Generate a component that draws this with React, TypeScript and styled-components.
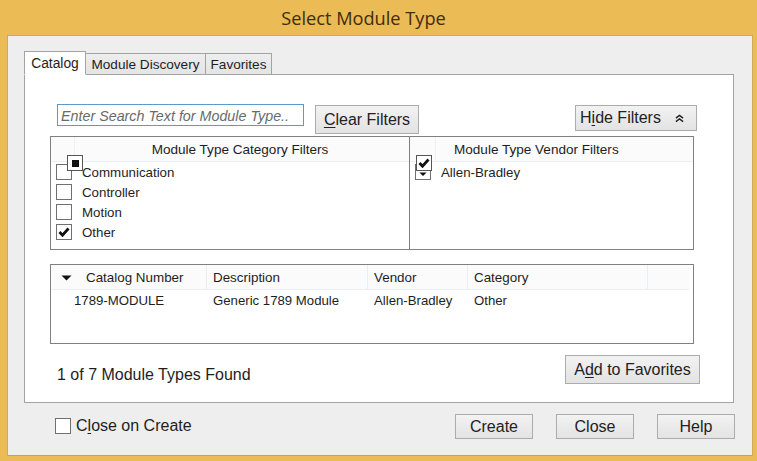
import React from "react";
import styled, { createGlobalStyle } from "styled-components";

const Global = createGlobalStyle`
  html, body { margin: 0; padding: 0; background: #ebbb55; }
  * { box-sizing: border-box; }
  u { text-underline-offset: 2px; text-decoration-thickness: 1px; }
`;

const Window = styled.div`
  position: relative;
  width: 757px;
  height: 461px;
  background: #ebbb55;
  font-family: "Liberation Sans", Arial, sans-serif;
  color: #1e1e1e;
  display: flex;
  flex-direction: column;
  overflow: hidden;
`;
const TitleBar = styled.div`
  height: 35px;
  flex: none;
  display: flex;
  align-items: center;
  justify-content: center;
  padding-right: 30px;
  font-family: "Open Sans", sans-serif;
  font-size: 18.2px;
  color: #3f2d0e;
`;
const Panel = styled.div`
  margin: 0 4px 0 7px;
  height: 421px;
  flex: none;
  background: #eeeeee;
  border: 1px solid #cfa95c;
  border-bottom-color: #c9a24f;
  padding: 15px 0 0 16px;
`;
const TabStrip = styled.div`
  display: flex;
  align-items: flex-end;
  height: 24px;
  position: relative;
  z-index: 1;
`;
const Tab = styled.div<{ $active?: boolean; $w: number }>`
  width: ${(p) => p.$w}px;
  height: ${(p) => (p.$active ? 24 : 22)}px;
  display: flex;
  align-items: center;
  justify-content: center;
  font-size: ${(p) => (p.$active ? 13.8 : 13.6)}px;
  background: ${(p) => (p.$active ? "#ffffff" : "linear-gradient(#eeeeee,#e4e4e4)")};
  border: 1px solid #a3a3a3;
  border-left-width: ${(p) => (p.$active ? 1 : 0)}px;
  border-bottom: ${(p) => (p.$active ? "1px solid #ffffff" : "1px solid #a3a3a3")};
`;
const Content = styled.div`
  width: 710px;
  height: 329px;
  margin-top: -1px;
  background: #ffffff;
  border: 1px solid #a3a3a3;
  padding: 29px 39px 0 25px;
`;
const Toolbar = styled.div`
  display: flex;
  align-items: flex-start;
  height: 32px;
  padding-left: 7px;
`;
const Search = styled.input`
  width: 247px;
  height: 22px;
  padding: 1px 3px 0;
  border: 1px solid #5b9bcb;
  outline: none;
  font: italic 14.3px "Liberation Sans", Arial, sans-serif;
  &::placeholder { color: #6a6a6a; opacity: 1; }
`;
const Button = styled.button<{ $w: number; $h: number }>`
  width: ${(p) => p.$w}px;
  height: ${(p) => p.$h}px;
  flex: none;
  padding: 0;
  display: inline-flex;
  align-items: center;
  justify-content: center;
  background: linear-gradient(#f2f2f2, #e3e3e3);
  border: 1px solid #acacac;
  color: #222;
  font: 16px "Liberation Sans", Arial, sans-serif;
`;
const ClearButton = styled(Button)`
  margin: 1px 0 0 11px;
`;
const HideButton = styled(Button)`
  margin: 1px -3px 0 auto;
  justify-content: flex-start;
  padding-left: 4px;
  gap: 14px;
`;
const Filters = styled.div`
  display: flex;
  height: 114px;
`;
const FilterBox = styled.div<{ $w: number }>`
  width: ${(p) => p.$w}px;
  flex: none;
  border: 1px solid #808080;
  position: relative;
  & + & { margin-left: -1px; }
`;
const FilterHeader = styled.div<{ $first: number }>`
  height: 25px;
  display: grid;
  grid-template-columns: ${(p) => p.$first}px 1fr;
  align-items: center;
  background: #fbfbfb;
  border-bottom: 1px solid #e9eff3;
  font-size: 13.55px;
`;
const HeaderBlank = styled.div`
  height: 100%;
  border-right: 1px solid #eef0f2;
`;
const HeaderTitle = styled.div<{ $left?: boolean }>`
  text-align: ${(p) => (p.$left ? "left" : "center")};
  padding-left: ${(p) => (p.$left ? 18 : 0)}px;
  padding-right: ${(p) => (p.$left ? 0 : 4)}px;
  padding-top: 1px;
  white-space: nowrap;
`;
const FilterRow = styled.div<{ $pad: number }>`
  display: flex;
  align-items: center;
  height: 20px;
  padding-left: ${(p) => p.$pad}px;
  font-size: 13.3px;
`;
const Box = styled.span<{ $size?: number }>`
  width: ${(p) => p.$size ?? 16}px;
  height: ${(p) => p.$size ?? 16}px;
  flex: none;
  display: inline-flex;
  align-items: center;
  justify-content: center;
  background: #ffffff;
  border: 1px solid #707070;
`;
const CaretBox = styled(Box)`
  padding-top: 5px;
`;
const RowLabel = styled.span`
  margin-left: 10px;
`;
const DockMarker = styled.span`
  position: absolute;
  left: 16px;
  top: 18px;
  width: 16px;
  height: 16px;
  background: #ffffff;
  border: 1px solid #555;
  display: flex;
  align-items: center;
  justify-content: center;
  &::after { content: ""; width: 7px; height: 7px; background: #111; }
`;
const VendorMarker = styled.span`
  position: absolute;
  left: 6px;
  top: 18px;
  width: 16px;
  height: 16px;
  background: #ffffff;
  border: 1px solid #555;
  display: flex;
  align-items: center;
  justify-content: center;
`;
const Grid = styled.div`
  margin-top: 14px;
  height: 80px;
  border: 1px solid #808080;
`;
const columns = "156px 161px 100px 180px 41px";
const GridHead = styled.div`
  display: grid;
  grid-template-columns: ${columns};
  height: 25px;
  background: #fbfbfb;
  border-bottom: 1px solid #e9eff3;
  margin-right: 4px;
  align-items: stretch;
  font-size: 13.4px;
`;
const HeadCell = styled.div`
  display: flex;
  align-items: center;
  padding-left: 6px;
  padding-top: 1px;
  border-right: 1px solid #e8eef3;
  &:last-child { border-right: 0; }
`;
const FirstHeadCell = styled(HeadCell)`
  padding-left: 10px;
  gap: 14px;
`;
const GridRow = styled.div`
  display: grid;
  grid-template-columns: ${columns};
  height: 20px;
  align-items: center;
  font-size: 13.2px;
`;
const Cell = styled.div`
  padding-left: 6px;
`;
const FirstCell = styled.div`
  padding-left: 23px;
`;
const StatusRow = styled.div`
  margin: 11px -6px 0 7px;
  display: flex;
  align-items: center;
  justify-content: space-between;
  font-size: 16px;
`;
const CountLabel = styled.span`
  margin-top: 10px;
`;
const Footer = styled.div`
  width: 711px;
  margin-top: 11px;
  display: flex;
  align-items: center;
  padding-left: 31px;
  gap: 23px;
  font-size: 16px;
`;
const CloseOption = styled.label`
  display: flex;
  align-items: center;
  gap: 5px;
  margin-right: auto;
  padding-bottom: 1px;
`;

const Check = () => (
  <svg width="12" height="10" viewBox="0 0 12 10">
    <path d="M1.5 5 L4.5 8.2 L10.5 1.5" fill="none" stroke="#111" strokeWidth="2.8" />
  </svg>
);
const Caret = ({ w = 11 }: { w?: number }) => (
  <svg width={w} height={w / 2 + 0.5} viewBox="0 0 11 6">
    <path d="M0.5 0.5 H10.5 L5.5 5.5 Z" fill="#111" />
  </svg>
);
const DoubleUp = () => (
  <svg width="9" height="9" viewBox="0 0 10 9">
    <path d="M1 4 L5 1 L9 4 M1 8 L5 5 L9 8" fill="none" stroke="#222" strokeWidth="1.6" />
  </svg>
);

const categories = ["Communication", "Controller", "Motion", "Other"];

export default function App() {
  return (
    <Window>
      <Global />
      <TitleBar>Select Module Type</TitleBar>
      <Panel>
        <TabStrip>
          <Tab $active $w={62}>Catalog</Tab>
          <Tab $w={120}>Module Discovery</Tab>
          <Tab $w={66}>Favorites</Tab>
        </TabStrip>
        <Content>
          <Toolbar>
            <Search placeholder="Enter Search Text for Module Type.." />
            <ClearButton $w={104} $h={29}>
              <span><u>C</u>lear Filters</span>
            </ClearButton>
            <HideButton $w={122} $h={26}>
              <span>H<u>i</u>de Filters</span>
              <DoubleUp />
            </HideButton>
          </Toolbar>
          <Filters>
            <FilterBox $w={360}>
              <FilterHeader $first={24}>
                <HeaderBlank />
                <HeaderTitle>Module Type Category Filters</HeaderTitle>
              </FilterHeader>
              {categories.map((c) => (
                <FilterRow $pad={5} key={c}>
                  <Box>{c === "Other" && <Check />}</Box>
                  <RowLabel>{c}</RowLabel>
                </FilterRow>
              ))}
              <DockMarker />
            </FilterBox>
            <FilterBox $w={285}>
              <FilterHeader $first={26}>
                <HeaderBlank />
                <HeaderTitle $left>Module Type Vendor Filters</HeaderTitle>
              </FilterHeader>
              <FilterRow $pad={5}>
                <CaretBox><Caret w={8} /></CaretBox>
                <RowLabel>Allen-Bradley</RowLabel>
              </FilterRow>
              <VendorMarker><Check /></VendorMarker>
            </FilterBox>
          </Filters>
          <Grid>
            <GridHead>
              <FirstHeadCell><Caret />Catalog Number</FirstHeadCell>
              <HeadCell>Description</HeadCell>
              <HeadCell>Vendor</HeadCell>
              <HeadCell>Category</HeadCell>
              <HeadCell />
            </GridHead>
            <GridRow>
              <FirstCell>1789-MODULE</FirstCell>
              <Cell>Generic 1789 Module</Cell>
              <Cell>Allen-Bradley</Cell>
              <Cell>Other</Cell>
            </GridRow>
          </Grid>
          <StatusRow>
            <CountLabel>1 of 7 Module Types Found</CountLabel>
            <Button $w={135} $h={29}>
              <span>A<u>d</u>d to Favorites</span>
            </Button>
          </StatusRow>
        </Content>
        <Footer>
          <CloseOption>
            <Box />
            <span>C<u>l</u>ose on Create</span>
          </CloseOption>
          <Button $w={78} $h={25}>Create</Button>
          <Button $w={78} $h={25}>Close</Button>
          <Button $w={78} $h={25}>Help</Button>
        </Footer>
      </Panel>
    </Window>
  );
}
